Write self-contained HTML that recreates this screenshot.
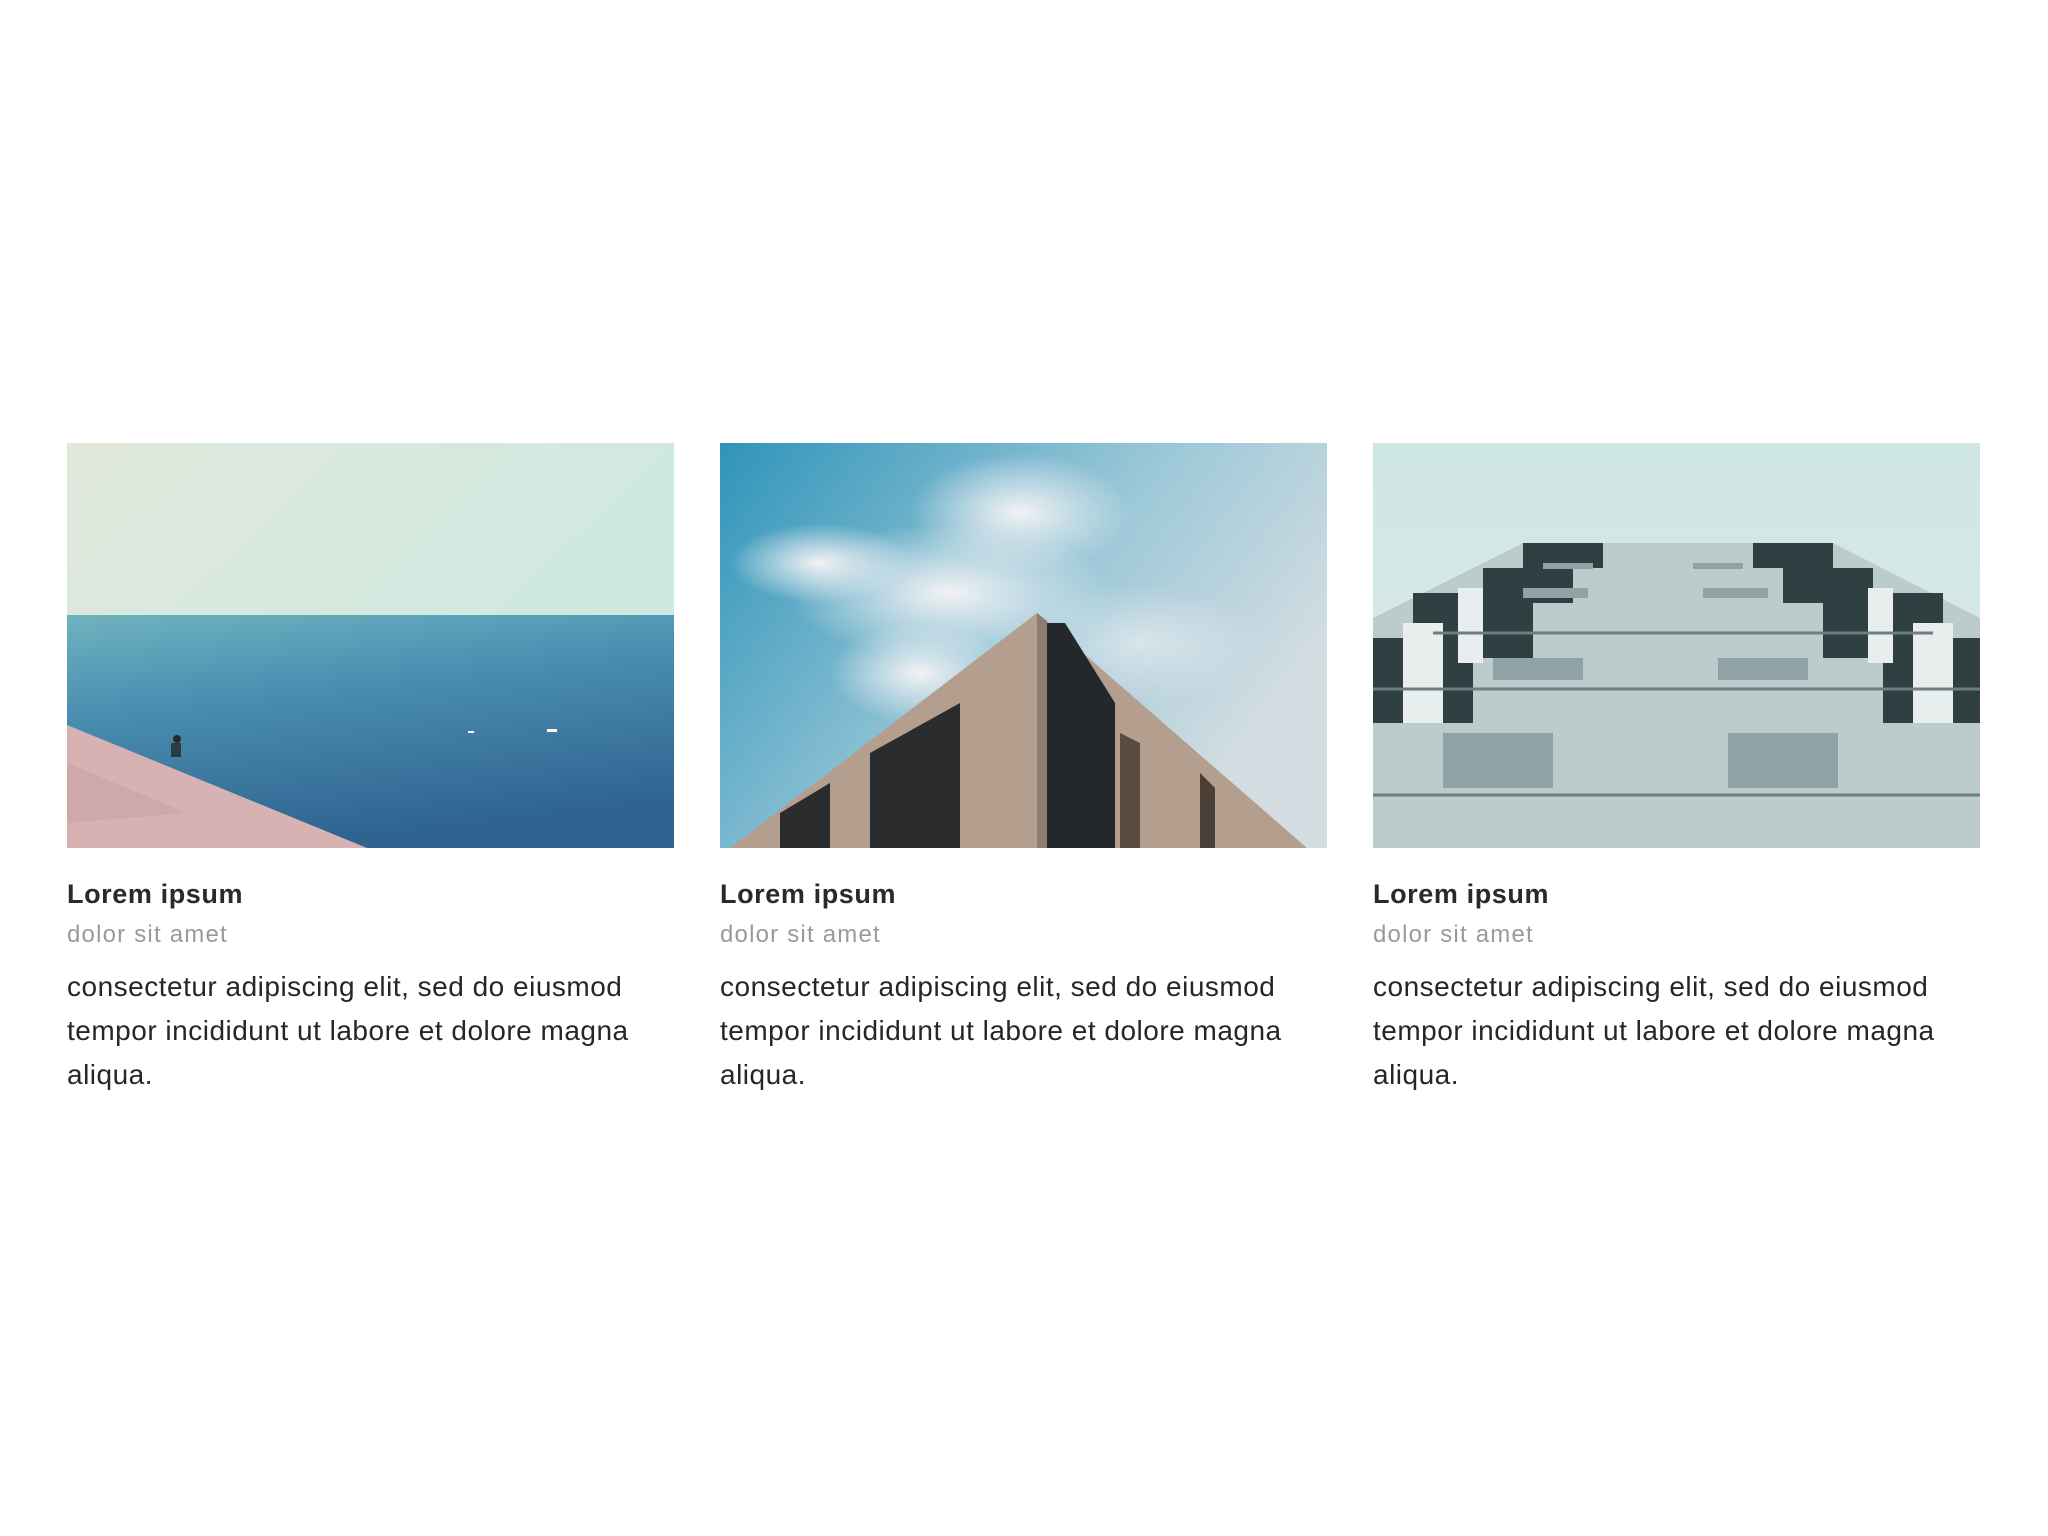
<!DOCTYPE html>
<html><head><meta charset="utf-8"><style>
html,body{margin:0;padding:0;background:#fff;width:2048px;height:1536px;overflow:hidden}
.card{position:absolute;top:443px;width:607px}
.card svg{display:block;width:607px;height:405px}
.t{position:absolute;left:0;top:436px;font:bold 27px "Liberation Sans",sans-serif;color:#2a2a2a;letter-spacing:0.6px;white-space:nowrap}
.s{position:absolute;left:0;top:478px;font:24px "Liberation Sans",sans-serif;color:#9a9a9a;letter-spacing:1.2px;white-space:nowrap}
.b{position:absolute;left:0;top:522px;font:28px/44px "Liberation Sans",sans-serif;color:#262626;letter-spacing:0.5px;white-space:nowrap}
</style></head><body>
<div class="card" style="left:67px">
<svg viewBox="0 0 607 405">
<defs>
<linearGradient id="sk1" x1="0" y1="0" x2="1" y2="0.3"><stop offset="0" stop-color="#e1e8dc"/><stop offset="1" stop-color="#cfe9e0"/></linearGradient>
<linearGradient id="w1" x1="0" y1="0" x2="0.3" y2="1"><stop offset="0" stop-color="#6fb3bf"/><stop offset="0.4" stop-color="#4a8eb2"/><stop offset="1" stop-color="#2f6490"/></linearGradient>
</defs>
<rect width="607" height="175" fill="url(#sk1)"/>
<rect y="172" width="607" height="233" fill="url(#w1)"/>
<polygon points="0,282 300,405 0,405" fill="#d7b2b3"/>
<polygon points="0,320 120,370 0,380" fill="#c9a2a6" opacity="0.6"/>
<rect x="104" y="300" width="10" height="14" fill="#2a3c40"/>
<circle cx="110" cy="296" r="4" fill="#2a2a2a"/>
<rect x="401" y="288" width="6" height="2" fill="#fff"/>
<rect x="480" y="286" width="10" height="3" fill="#fff"/>
</svg>
<div class="t">Lorem ipsum</div><div class="s">dolor sit amet</div>
<div class="b">consectetur adipiscing elit, sed do eiusmod<br>tempor incididunt ut labore et dolore magna<br>aliqua.</div>
</div>
<div class="card" style="left:720px">
<svg viewBox="0 0 607 405">
<defs>
<linearGradient id="sk2" x1="0" y1="0" x2="1" y2="0.5"><stop offset="0" stop-color="#2f94b9"/><stop offset="0.6" stop-color="#9cc8d8"/><stop offset="1" stop-color="#d3dde2"/></linearGradient>
<radialGradient id="cl"><stop offset="0" stop-color="#f2f2f4"/><stop offset="1" stop-color="#f2f2f4" stop-opacity="0"/></radialGradient>
</defs>
<rect width="607" height="405" fill="url(#sk2)"/>
<ellipse cx="230" cy="150" rx="160" ry="70" fill="url(#cl)"/>
<ellipse cx="300" cy="70" rx="110" ry="60" fill="url(#cl)"/>
<ellipse cx="100" cy="120" rx="90" ry="40" fill="url(#cl)"/>
<ellipse cx="200" cy="230" rx="90" ry="50" fill="url(#cl)"/>
<ellipse cx="420" cy="200" rx="120" ry="60" fill="url(#cl)" opacity="0.6"/>
<polygon points="317,170 10,405 587,405" fill="#b49f8e"/>
<polygon points="320,180 345,180 395,260 395,405 320,405" fill="#25282a"/>
<polygon points="150,310 240,260 240,405 150,405" fill="#2a2c2e"/>
<polygon points="60,370 110,340 110,405 60,405" fill="#2a2c2e"/>
<polygon points="400,290 420,300 420,405 400,405" fill="#5a4b40"/>
<polygon points="480,330 495,345 495,405 480,405" fill="#4a3f37"/>
<polygon points="317,170 327,178 327,405 317,405" fill="#8c7d70"/>
</svg>
<div class="t">Lorem ipsum</div><div class="s">dolor sit amet</div>
<div class="b">consectetur adipiscing elit, sed do eiusmod<br>tempor incididunt ut labore et dolore magna<br>aliqua.</div>
</div>
<div class="card" style="left:1373px">
<svg viewBox="0 0 607 405">
<defs>
<linearGradient id="sk3" x1="0" y1="0" x2="0" y2="1"><stop offset="0" stop-color="#cde6e4"/><stop offset="1" stop-color="#e2ecea"/></linearGradient>
</defs>
<rect width="607" height="405" fill="url(#sk3)"/>
<polygon points="0,175 0,405 607,405 607,175 460,100 150,100" fill="#bccbcc"/>
<g fill="#2f3f42">
<polygon points="150,100 230,100 230,125 150,125"/><polygon points="380,100 460,100 460,125 380,125"/>
<polygon points="110,125 200,125 200,160 110,160"/><polygon points="410,125 500,125 500,160 410,160"/>
<polygon points="40,150 160,150 160,215 40,215"/><polygon points="450,150 570,150 570,215 450,215"/>
<polygon points="0,195 100,195 100,280 0,280"/><polygon points="510,195 607,195 607,280 510,280"/>
</g>
<g fill="#e8eeee">
<rect x="30" y="180" width="40" height="100"/><rect x="540" y="180" width="40" height="100"/>
<rect x="85" y="145" width="25" height="75"/><rect x="495" y="145" width="25" height="75"/>
</g>
<g fill="#8fa3a6">
<rect x="170" y="120" width="50" height="6"/><rect x="320" y="120" width="50" height="6"/>
<rect x="150" y="145" width="65" height="10"/><rect x="330" y="145" width="65" height="10"/>
<rect x="120" y="215" width="90" height="22"/><rect x="345" y="215" width="90" height="22"/>
<rect x="70" y="290" width="110" height="55"/><rect x="355" y="290" width="110" height="55"/>
</g>
<g stroke="#6c7e80" stroke-width="3">
<line x1="0" y1="246" x2="607" y2="246"/><line x1="0" y1="352" x2="607" y2="352"/><line x1="60" y1="190" x2="560" y2="190"/>
</g>
</svg>
<div class="t">Lorem ipsum</div><div class="s">dolor sit amet</div>
<div class="b">consectetur adipiscing elit, sed do eiusmod<br>tempor incididunt ut labore et dolore magna<br>aliqua.</div>
</div>
</body></html>
